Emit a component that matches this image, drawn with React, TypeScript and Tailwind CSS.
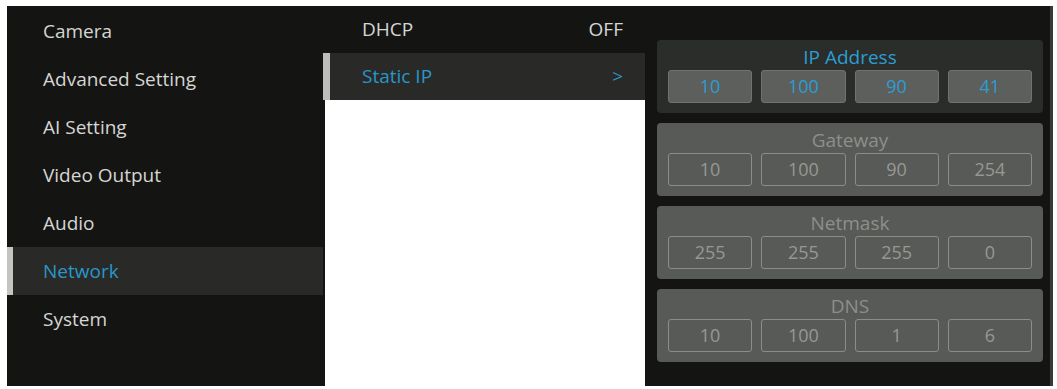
import React from 'react'

const menu = ['Camera', 'Advanced Setting', 'AI Setting', 'Video Output', 'Audio', 'Network', 'System']

const groups = [
  { title: 'IP Address', values: ['10', '100', '90', '41'], active: true },
  { title: 'Gateway', values: ['10', '100', '90', '254'], active: false },
  { title: 'Netmask', values: ['255', '255', '255', '0'], active: false },
  { title: 'DNS', values: ['10', '100', '1', '6'], active: false },
]

function IpCard({ title, values, active }: { title: string; values: string[]; active: boolean }) {
  return (
    <div className={`h-[73px] rounded-[4px] pt-[7px] px-[11px] ${active ? 'bg-[#2b2d2b]' : 'bg-[#585a57]'}`}>
      <div className={`h-[20px] leading-[20px] text-center ${active ? 'text-[#2c9dd3]' : 'text-[#8d8f8b]'}`}>
        {title}
      </div>
      <div className="mt-[3px] grid grid-cols-4 gap-[9px]">
        {values.map((v, i) => (
          <div
            key={i}
            className={`h-[33px] rounded-[3px] border flex items-center justify-center text-[18px] ${
              active
                ? 'bg-[#5c5f5c] border-[#6f726e] text-[#2c9dd3]'
                : 'border-[#8b8d89] text-[#969894]'
            }`}
          >
            {v}
          </div>
        ))}
      </div>
    </div>
  )
}

export default function App() {
  return (
    <div
      className="w-[1057px] h-[389px] bg-white pt-[6px] pl-[7px] text-[19px]"
      style={{ fontFamily: '"Open Sans", "Liberation Sans", sans-serif' }}
    >
      <div className="w-[1046px] h-[380px] bg-[#141513] flex">
        {/* main menu */}
        <div className="w-[316px] pt-[1px] flex flex-col font-medium">
          {menu.map((item) => {
            const selected = item === 'Network'
            return (
              <div
                key={item}
                className={`h-[48px] flex items-center ${
                  selected
                    ? 'bg-[#292a28] border-l-[6px] border-[#c4c4c2] pl-[30px] text-[#2a96c8]'
                    : 'pl-[36px] text-[#d6d6d4]'
                }`}
              >
                {item}
              </div>
            )
          })}
        </div>

        {/* sub menu */}
        <div className="w-[322px] flex flex-col font-medium">
          <div className="h-[47px] flex items-center justify-between pl-[39px] pr-[22px] text-[#d6d6d4]">
            <span>DHCP</span>
            <span>OFF</span>
          </div>
          <div className="h-[47px] flex items-center justify-between bg-[#292a28] border-l-[7px] border-[#bdbdbb] pl-[32px] pr-[22px] text-[#2a96c8]">
            <span>Static IP</span>
            <span>&gt;</span>
          </div>
          <div className="flex-1 bg-white border-l-[2px] border-[#141513]" />
        </div>

        {/* ip settings */}
        <div className="flex-1 pl-[12px] pr-[7px] pt-[34px] flex flex-col gap-[10px] border-r-[3px] border-[#3a3b39]">
          {groups.map((g) => (
            <IpCard key={g.title} {...g} />
          ))}
        </div>
      </div>
    </div>
  )
}
